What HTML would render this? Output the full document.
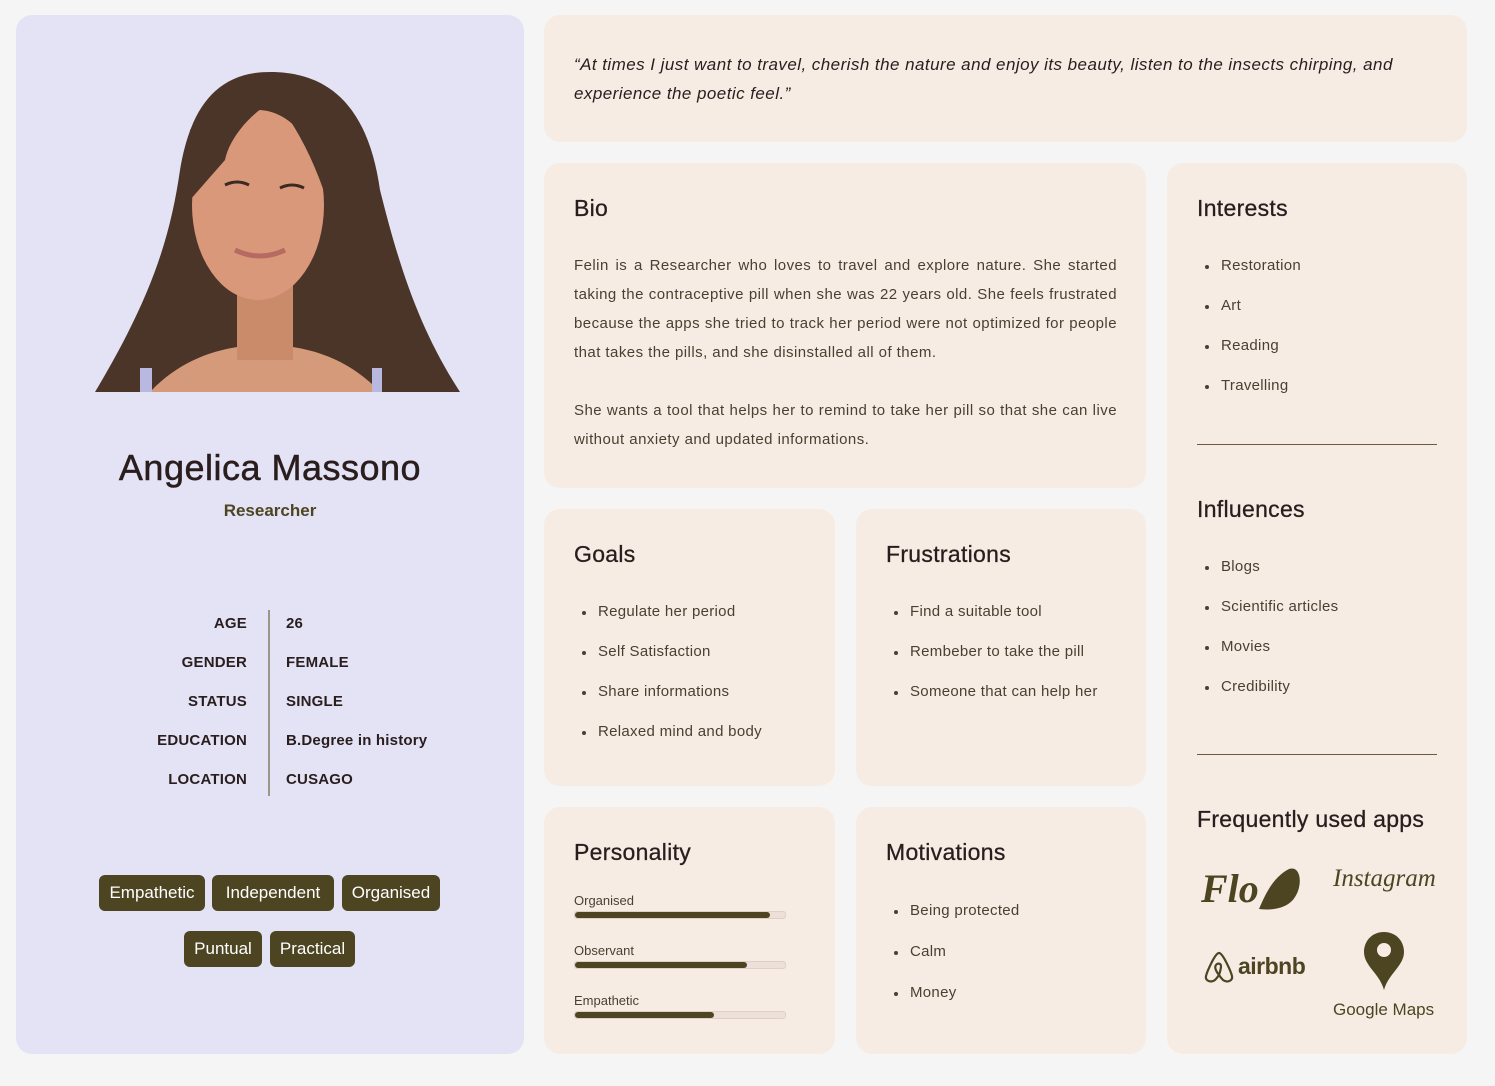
<!DOCTYPE html>
<html><head><meta charset="utf-8"><style>
*{box-sizing:border-box;margin:0;padding:0}
body{width:1495px;height:1086px;background:#f5f5f5;font-family:"Liberation Sans",sans-serif;color:#2a1d1d;position:relative;overflow:hidden}
.card{position:absolute;background:#f7ece4;border-radius:16px}
.left{position:absolute;left:16px;top:15px;width:508px;height:1039px;background:#e3e3f5;border-radius:16px}
h2{font-size:23px;font-weight:normal;color:#2a1d1d;position:absolute;left:30px;top:32px;letter-spacing:.3px;-webkit-text-stroke:.3px #2a1d1d}
ul{list-style:none;position:absolute;left:38px}
li{font-size:15px;color:#4a3f30;height:40px;position:relative;padding-left:16px;letter-spacing:.3px}
li:before{content:"";position:absolute;left:0;top:8px;width:4px;height:4px;border-radius:50%;background:#4a3f30}
.p{font-size:15px;color:#4a3f30;line-height:29px;text-align:justify;letter-spacing:.45px}
.tag{position:absolute;background:#4d4522;color:#fff;font-size:17px;height:36px;line-height:36px;border-radius:6px;text-align:center}
.lab{position:absolute;font-size:15px;color:#2a1d1d;font-weight:bold;letter-spacing:.2px}
.bar{position:absolute;left:30px;width:212px;height:8px;background:#ede0d8;border:1px solid #ddd0c6;border-radius:3px}
.bar i{display:block;height:100%;background:#4d4522;border-radius:3px}
.bl{position:absolute;left:30px;font-size:13px;color:#4a3f30}
hr{position:absolute;left:30px;width:240px;border:0;border-top:1px solid #6b5a40}
</style></head><body>
<div class="left">
<svg style="position:absolute;left:72px;top:45px" width="380" height="340" viewBox="88 60 380 340">
<path d="M270 72 C215 72 190 110 180 170 C170 240 150 300 95 392 L460 392 C420 330 400 270 380 190 C370 120 340 72 270 72Z" fill="#4a3528"/>
<path d="M150 392 C180 360 220 345 265 345 C310 345 350 360 380 392Z" fill="#d49a7a"/>
<rect x="237" y="280" width="56" height="80" fill="#c98b6a"/>
<ellipse cx="258" cy="205" rx="66" ry="95" fill="#d9987a"/>
<path d="M225 185 q12 -6 24 0 M280 188 q12 -6 24 0" stroke="#3a2a22" stroke-width="3" fill="none"/>
<path d="M235 250 q25 12 50 0" stroke="#b66a62" stroke-width="5" fill="none"/>
<path d="M190 130 C215 100 250 95 275 100 C255 110 230 135 225 160 L190 200Z" fill="#4a3528"/>
<path d="M275 100 C300 105 320 125 328 160 L330 210 C318 170 300 130 275 100Z" fill="#4a3528"/>
<rect x="140" y="368" width="12" height="24" fill="#b9b8e0"/><rect x="372" y="368" width="10" height="24" fill="#b9b8e0"/>
</svg>
<div style="position:absolute;top:432px;width:100%;text-align:center;font-size:36px;color:#2a1d1d;letter-spacing:.5px;-webkit-text-stroke:.5px #2a1d1d">Angelica Massono</div>
<div style="position:absolute;top:486px;width:100%;text-align:center;font-size:17px;color:#4d4522;font-weight:bold">Researcher</div>
<div style="position:absolute;left:252px;top:595px;width:2px;height:186px;background:#9a9688"></div>
<div class="lab" style="right:277px;top:600px">AGE</div><div class="lab" style="left:270px;top:600px">26</div>
<div class="lab" style="right:277px;top:639px">GENDER</div><div class="lab" style="left:270px;top:639px">FEMALE</div>
<div class="lab" style="right:277px;top:678px">STATUS</div><div class="lab" style="left:270px;top:678px">SINGLE</div>
<div class="lab" style="right:277px;top:717px">EDUCATION</div><div class="lab" style="left:270px;top:717px">B.Degree in history</div>
<div class="lab" style="right:277px;top:756px">LOCATION</div><div class="lab" style="left:270px;top:756px">CUSAGO</div>
<div class="tag" style="left:83px;top:860px;width:106px">Empathetic</div>
<div class="tag" style="left:196px;top:860px;width:122px">Independent</div>
<div class="tag" style="left:326px;top:860px;width:98px">Organised</div>
<div class="tag" style="left:168px;top:916px;width:78px">Puntual</div>
<div class="tag" style="left:254px;top:916px;width:85px">Practical</div>
</div>

<div class="card" style="left:544px;top:15px;width:923px;height:127px">
<div style="position:absolute;left:30px;top:35px;width:870px;font-size:17px;font-style:italic;line-height:29px;color:#2a1d1d;letter-spacing:.45px">“At times I just want to travel, cherish the nature and enjoy its beauty, listen to the insects chirping, and experience the poetic feel.”</div></div>

<div class="card" style="left:544px;top:163px;width:602px;height:325px"><h2>Bio</h2>
<div class="p" style="position:absolute;left:30px;top:88px;width:543px">Felin is a Researcher who loves to travel and explore nature. She started taking the contraceptive pill when she was 22 years old. She feels frustrated because the apps she tried to track her period were not optimized for people that takes the pills, and she disinstalled all of them.<br><br>She wants a tool that helps her to remind to take her pill so that she can live without anxiety and updated informations.</div></div>

<div class="card" style="left:1167px;top:163px;width:300px;height:891px">
<h2>Interests</h2>
<ul style="top:94px"><li>Restoration</li><li>Art</li><li>Reading</li><li>Travelling</li></ul>
<hr style="top:281px">
<h2 style="top:333px">Influences</h2>
<ul style="top:395px"><li>Blogs</li><li>Scientific articles</li><li>Movies</li><li>Credibility</li></ul>
<hr style="top:591px">
<h2 style="top:643px">Frequently used apps</h2>
<div style="position:absolute;left:34px;top:702px;font-family:'Liberation Serif',serif;font-style:italic;font-weight:bold;font-size:40px;color:#4d4522">Flo</div>
<svg style="position:absolute;left:88px;top:702px" width="48" height="48" viewBox="0 0 48 48"><path d="M4 44 C10 30 18 12 34 4 C46 0 48 20 40 32 C34 42 20 46 4 44Z" fill="#4d4522"/></svg>
<div style="position:absolute;left:166px;top:702px;font-family:'Liberation Serif',serif;font-style:italic;font-size:25px;color:#4d4522">Instagram</div>
<svg style="position:absolute;left:36px;top:787px" width="32" height="34" viewBox="0 0 32 34"><path d="M16 3 C12 3 4 22 3 26 C2 31 8 33 12 30 C14 28 16 25 16 25 C16 25 18 28 20 30 C24 33 30 31 29 26 C28 22 20 3 16 3Z M16 25 C12 20 11 16 14 14 C16 13 18 14 18 16 C18 19 16 25 16 25Z" fill="none" stroke="#4d4522" stroke-width="2.2"/></svg>
<div style="position:absolute;left:71px;top:790px;font-size:23px;font-weight:bold;color:#4d4522;letter-spacing:-.5px">airbnb</div>
<svg style="position:absolute;left:195px;top:767px" width="44" height="62" viewBox="0 0 44 62"><path d="M22 2 C10 2 2 11 2 22 C2 36 18 44 22 60 C26 44 42 36 42 22 C42 11 34 2 22 2Z" fill="#4d4522"/><circle cx="22" cy="20" r="7" fill="#f7ece4"/></svg>
<div style="position:absolute;left:166px;top:837px;font-size:17px;color:#4d4522">Google Maps</div>
</div>

<div class="card" style="left:544px;top:509px;width:291px;height:277px"><h2>Goals</h2>
<ul style="top:94px"><li>Regulate her period</li><li>Self Satisfaction</li><li>Share informations</li><li>Relaxed mind and body</li></ul></div>

<div class="card" style="left:856px;top:509px;width:290px;height:277px"><h2>Frustrations</h2>
<ul style="top:94px"><li>Find a suitable tool</li><li>Rembeber to take the pill</li><li>Someone that can help her</li></ul></div>

<div class="card" style="left:544px;top:807px;width:291px;height:247px"><h2>Personality</h2>
<div class="bl" style="top:86px">Organised</div><div class="bar" style="top:104px"><i style="width:93%"></i></div>
<div class="bl" style="top:136px">Observant</div><div class="bar" style="top:154px"><i style="width:82%"></i></div>
<div class="bl" style="top:186px">Empathetic</div><div class="bar" style="top:204px"><i style="width:66%"></i></div>
</div>

<div class="card" style="left:856px;top:807px;width:290px;height:247px"><h2>Motivations</h2>
<ul style="top:95px"><li style="height:41px">Being protected</li><li style="height:41px">Calm</li><li>Money</li></ul></div>
</body></html>
